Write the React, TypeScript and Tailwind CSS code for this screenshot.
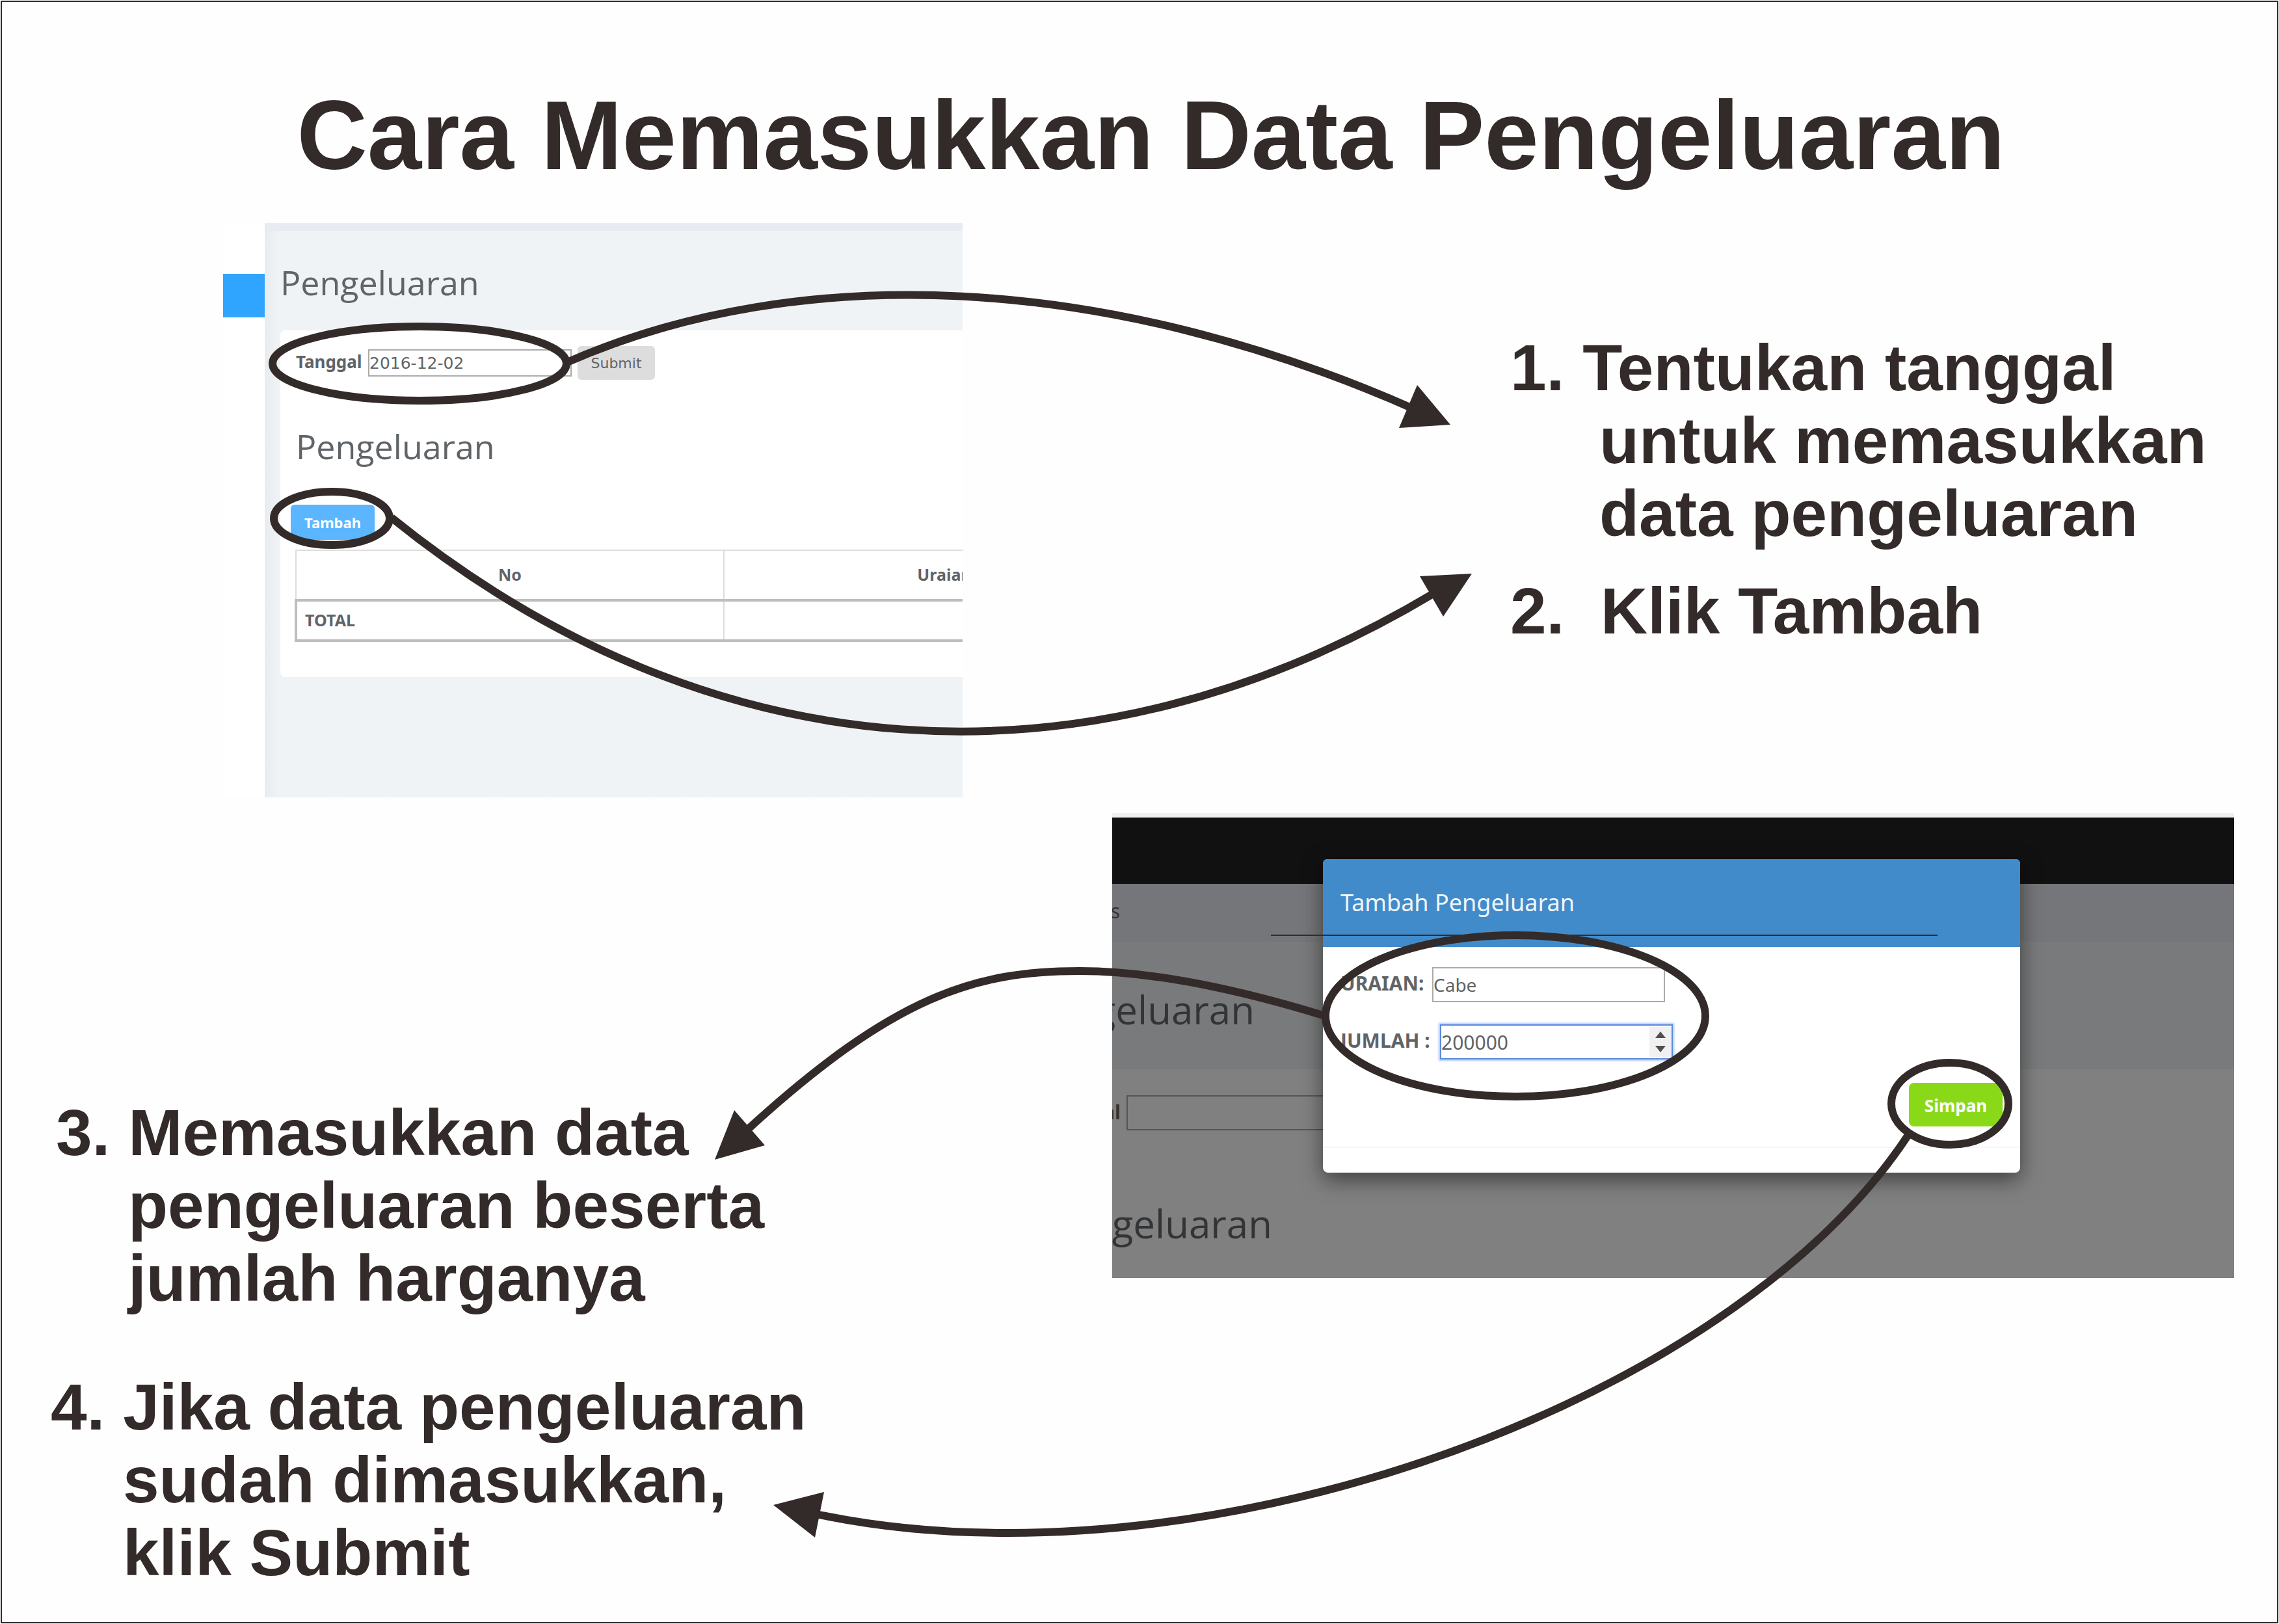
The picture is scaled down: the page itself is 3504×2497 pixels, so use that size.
import React from "react";

const INK = "#332b2a";

function ExpensePage() {
  return (
    <section className="flex min-w-0 flex-1 self-start overflow-hidden text-[#5f6468]">
      <div className="w-[64px] shrink-0 bg-white pt-[78px]">
        <div className="h-[67px] bg-[#30a5ff]" />
      </div>
      <div className="min-w-0 flex-1 overflow-hidden border-t-[12px] border-[#e8ebf2] bg-[#eff3f6] bg-linear-to-r from-[#e9ecef] from-0% to-[#eff3f6] to-[2%] pb-[185px] pl-6 pt-[43px]">
        <h2 className="font-['Open_Sans',sans-serif] text-[52px] leading-[72px]">Pengeluaran</h2>
        <div className="mt-[38px] w-[1400px] rounded-lg bg-white pb-[54px] pl-4 pt-6 font-['Noto_Sans',sans-serif] text-[25px]">
          <form className="flex items-center gap-[9px] pl-2" onSubmit={(e) => e.preventDefault()}>
            <label htmlFor="tanggal" className="w-[102px] pb-1 text-[26px] font-bold leading-[34px]">
              Tanggal
            </label>
            <input
              id="tanggal"
              type="text"
              defaultValue="2016-12-02"
              className="h-[42px] w-[313px] border-2 border-[#ababab] bg-white font-['DejaVu_Sans',sans-serif] text-[25px]"
            />
            <button
              type="submit"
              className="h-[52px] w-[119px] rounded-md bg-[#dddddd] font-['DejaVu_Sans',sans-serif] text-[22px]"
            >
              Submit
            </button>
          </form>
          <h3 className="mt-[66px] pl-2 font-['Open_Sans',sans-serif] text-[52px] leading-[72px]">Pengeluaran</h3>
          <button
            type="button"
            className="mt-[54px] block h-[54px] w-[129px] rounded-md bg-[#5bb5ff] text-[22px] font-bold text-white"
          >
            Tambah
          </button>
          <table className="ml-[6px] mt-[15px] w-[1340px] table-fixed border-collapse">
            <thead>
              <tr className="h-[77px]">
                <th className="w-[658px] border-2 border-[#dddddd] font-bold">No</th>
                <th className="border-2 border-[#dddddd] font-bold">Uraian</th>
              </tr>
            </thead>
            <tbody className="border-4 border-[#bebebe]">
              <tr className="h-[62px]">
                <th scope="row" className="border-r-2 border-[#dddddd] px-3 text-left font-bold">
                  TOTAL
                </th>
                <td />
              </tr>
            </tbody>
          </table>
        </div>
      </div>
    </section>
  );
}

function ExpenseDialog() {
  return (
    <div
      role="dialog"
      aria-labelledby="dialog-title"
      className="absolute left-[324px] top-[71px] w-[1072px] rounded-lg bg-white text-[#5f6468] shadow-[0_11px_33px_rgba(0,0,0,0.5)]"
    >
      <h2
        id="dialog-title"
        className="flex h-[135px] items-center rounded-t-md bg-[#428bca] pb-[2px] pl-[27px] text-[36px] text-[#f0f6fb]"
      >
        Tambah Pengeluaran
      </h2>
      <form className="px-[27px] pb-[31px] pt-[31px] text-[30px]" onSubmit={(e) => e.preventDefault()}>
        <div className="flex h-[54px] items-center gap-[10px]">
          <label htmlFor="uraian" className="w-[131px] whitespace-nowrap pb-[6px] font-bold">
            URAIAN:
          </label>
          <input
            id="uraian"
            type="text"
            defaultValue="Cabe"
            className="h-[54px] w-[358px] border-2 border-[#ababab] bg-white text-[28px]"
          />
        </div>
        <div className="mt-[34px] flex h-[54px] items-center gap-[10px]">
          <label htmlFor="jumlah" className="w-[143px] whitespace-nowrap pb-[6px] font-bold">
            JUMLAH :
          </label>
          <div className="flex h-[54px] w-[358px] border-2 border-[#5b8ade] bg-white shadow-[0_0_3px_2px_#a9c8fb]">
            <input
              id="jumlah"
              type="text"
              inputMode="numeric"
              defaultValue="200000"
              className="min-w-0 flex-1 text-[30px] outline-none"
            />
            <div className="my-[2px] flex w-[34px] flex-col items-center justify-center gap-3 bg-[#f0f0f0]">
              <button type="button" aria-label="Tambah jumlah">
                <svg viewBox="0 0 16 10" className="block h-[10px] w-4">
                  <path d="M8 0 16 10H0Z" fill="#4f4f4f" />
                </svg>
              </button>
              <button type="button" aria-label="Kurangi jumlah">
                <svg viewBox="0 0 16 10" className="block h-[10px] w-4">
                  <path d="M0 0H16L8 10Z" fill="#4f4f4f" />
                </svg>
              </button>
            </div>
          </div>
        </div>
        <div className="mt-9 flex justify-end">
          <button
            type="submit"
            className="h-[67px] w-[144px] rounded-lg bg-[#8ad919] pt-1 text-[26px] font-bold text-white"
          >
            Simpan
          </button>
        </div>
      </form>
      <div className="h-10 border-t-2 border-[#f6f6f6]" />
    </div>
  );
}

function ExpenseDialogPage() {
  return (
    <section className="relative min-w-0 flex-1 self-start overflow-hidden bg-[#808080] font-['Noto_Sans',sans-serif] text-[#323436]">
      <div className="h-[7px] bg-[#f0f0f0]" />
      <div className="h-[102px] bg-[#111111]" />
      <div className="h-[89px] bg-[#757679] pt-[22px]">
        <div className="flex w-3 justify-end overflow-hidden text-[30px] leading-10">s</div>
      </div>
      <div className="h-[196px] bg-[#797a7b] pt-[64px]">
        <div className="flex w-[219px] justify-end overflow-hidden font-['Open_Sans',sans-serif] text-[60px] leading-[80px]">
          Pengeluaran
        </div>
      </div>
      <div className="flex items-center gap-[9px] pt-10">
        <label htmlFor="tanggal-latar" className="flex w-[13px] justify-end overflow-hidden pb-1 text-[30px] font-bold">
          Tanggal
        </label>
        <input
          id="tanggal-latar"
          type="text"
          className="h-[54px] w-[420px] border-2 border-[#555555] bg-[#808080]"
        />
      </div>
      <div className="mt-[103px] flex w-[246px] justify-end overflow-hidden pb-11 font-['Open_Sans',sans-serif] text-[60px] leading-[80px]">
        Pengeluaran
      </div>
      <ExpenseDialog />
    </section>
  );
}

function Callouts() {
  return (
    <svg
      viewBox="0 0 3504 2497"
      className="pointer-events-none absolute left-0 top-0 w-full"
      fill="none"
      stroke={INK}
      strokeWidth="12"
      aria-hidden="true"
    >
      <ellipse cx="645" cy="559" rx="226" ry="57" />
      <path d="M872 557C1230 400 1700 420 2172 628" />
      <path d="M2230 653 2179 592 2151 658Z" fill={INK} stroke="none" />

      <ellipse cx="510" cy="797" rx="89" ry="41" />
      <path d="M602 796C1090 1190 1672 1231 2205 912" />
      <path d="M2263 882 2183 886 2219 948Z" fill={INK} stroke="none" />

      <ellipse cx="2330" cy="1562" rx="292" ry="124" />
      <path d="M2034 1561C1880 1514 1760 1493 1660 1493C1500 1493 1375 1530 1148 1738" />
      <path d="M1099 1783 1129 1707 1176 1761Z" fill={INK} stroke="none" />

      <ellipse cx="2998" cy="1697" rx="90" ry="63" />
      <path d="M2934 1745C2700 2100 2080 2357 1549 2357C1450 2357 1350 2348 1255 2328" />
      <path d="M1189 2314 1267 2294 1253 2364Z" fill={INK} stroke="none" />

      <path d="M1954 1438H2979" strokeWidth="2" />
    </svg>
  );
}

export default function App() {
  return (
    <main className="relative flex min-h-screen flex-col bg-[#fefefe] p-px font-['Liberation_Sans',Arial,sans-serif] text-[#332b2a]">
      <div className="flex-1 border-2 border-[#332b2a]">
        <h1 className="pl-[35px] pt-[121px] text-center text-[150px] font-bold leading-[168px]">
          Cara Memasukkan Data Pengeluaran
        </h1>

        <div className="mt-[51px] flex gap-[842px] pl-[340px]">
          <ExpensePage />
          <ol className="w-[1179px] shrink-0 pt-[166px] text-[100px] font-bold leading-[112px]">
            <li className="whitespace-pre">
              1. Tentukan tanggal
              <span className="block pl-[137px]">untuk memasukkan</span>
              <span className="block pl-[137px]">data pengeluaran</span>
            </li>
            <li className="mt-[38px] whitespace-pre">{"2.  Klik Tambah"}</li>
          </ol>
        </div>

        <div className="mt-6 flex pr-[66px]">
          <ol start={3} className="w-[1707px] shrink-0 pl-[75px] pt-[435px] text-[100px] font-bold leading-[112px]">
            <li className="whitespace-pre pl-2">
              3. Memasukkan data
              <span className="block pl-[111px]">pengeluaran beserta</span>
              <span className="block pl-[111px]">jumlah harganya</span>
            </li>
            <li className="mt-[86px] whitespace-pre">
              4. Jika data pengeluaran
              <span className="block pl-[111px]">sudah dimasukkan,</span>
              <span className="block pl-[111px]">klik Submit</span>
            </li>
          </ol>
          <ExpenseDialogPage />
        </div>
      </div>
      <Callouts />
    </main>
  );
}
